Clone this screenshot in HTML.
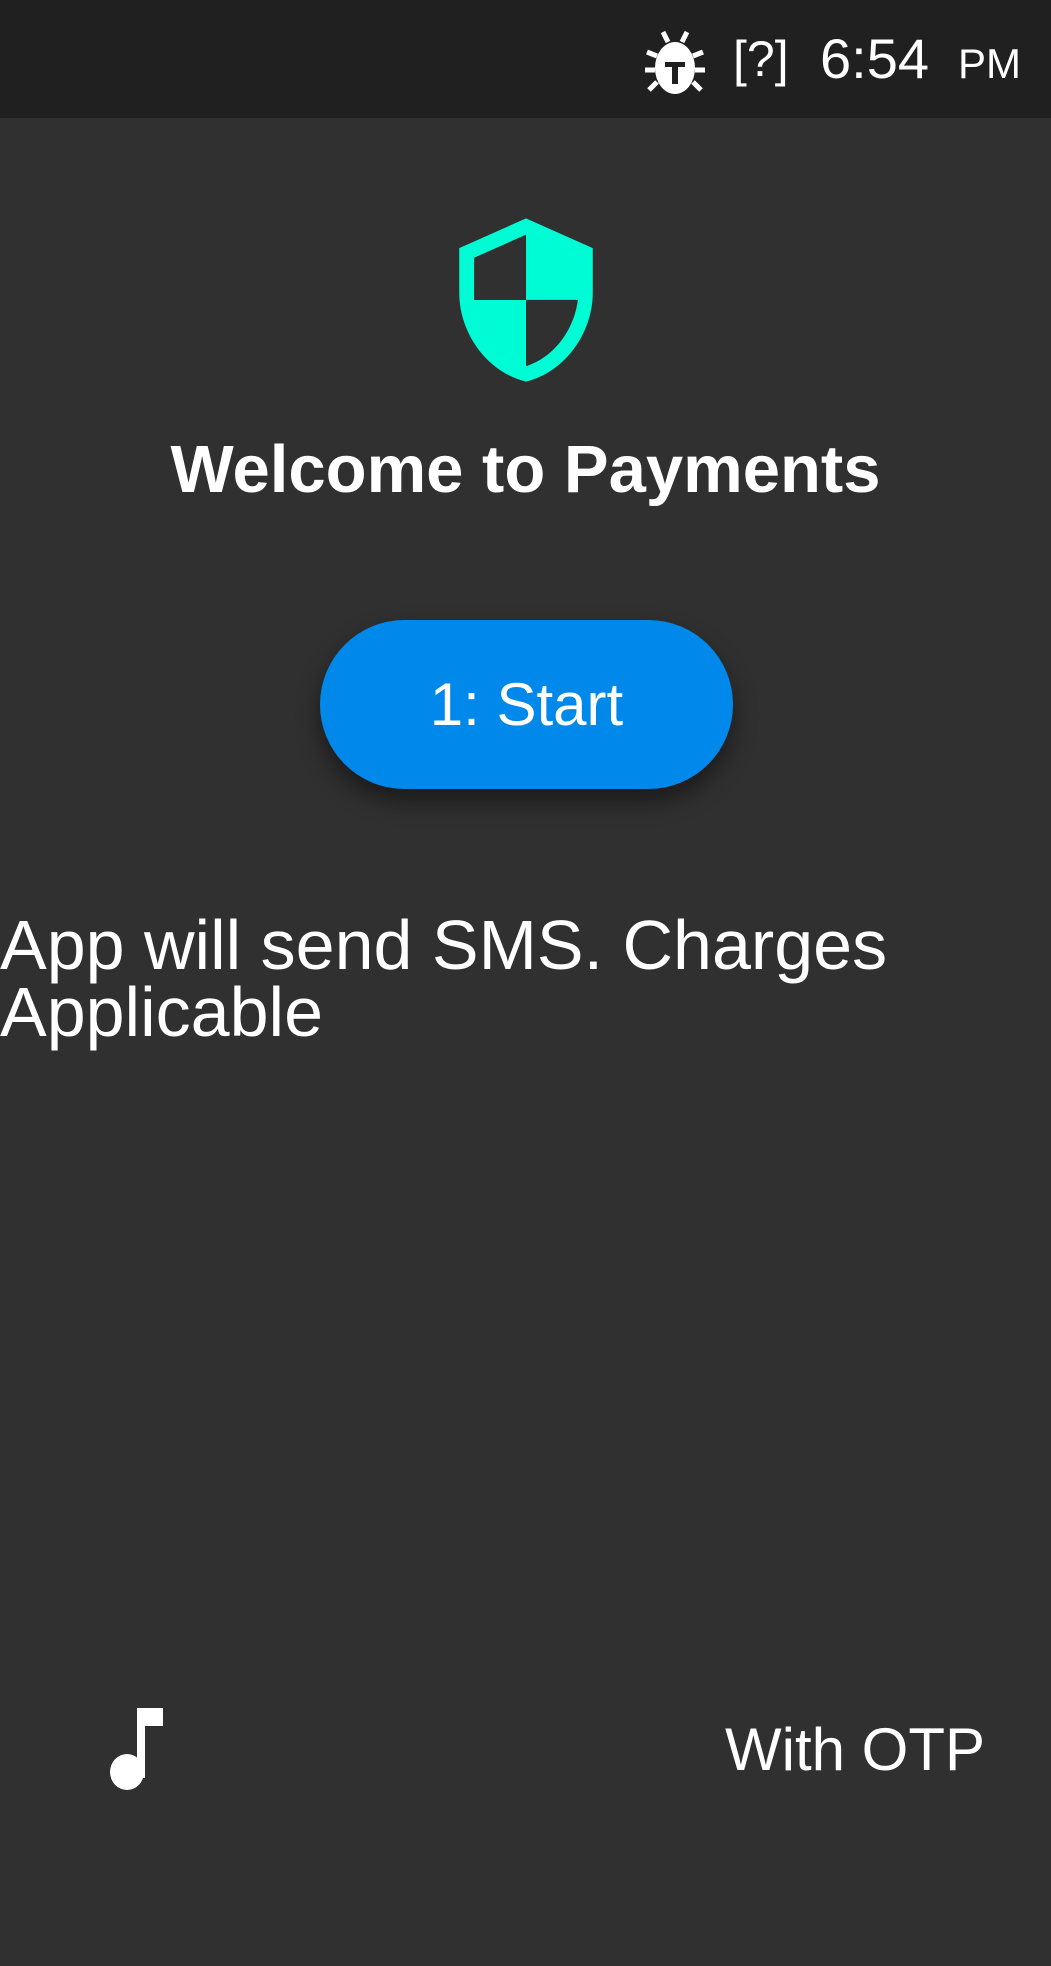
<!DOCTYPE html>
<html><head><meta charset="utf-8"><style>
html,body{margin:0;padding:0}
body{width:1051px;height:1966px;background:#303030;position:relative;overflow:hidden;font-family:"Liberation Sans",sans-serif;color:#fff}
.sb{position:absolute;left:0;top:0;width:1051px;height:118px;background:#202020}
.abs{position:absolute;white-space:nowrap}
</style></head><body>
<div class="sb">
<svg class="abs" style="left:643px;top:28px" width="64" height="68" viewBox="0 0 64 68">
<g stroke="#fff" stroke-width="5" fill="none">
<path d="M20 4 L25 14 M44 4 L39 14 M4 24 L14 28 M60 24 L50 28 M2 42 L12 42 M62 42 L52 42 M6 62 L14 54 M58 62 L50 54"/>
</g>
<ellipse cx="32" cy="40" rx="20" ry="26" fill="#fff"/>
<path d="M22 34 H42 V39 H35 V56 H29 V39 H22 Z" fill="#202020"/>
</svg>
<div class="abs" style="left:733px;top:31px;font-size:50px;line-height:56px">[?]</div>
<div class="abs" style="left:820px;top:31px;font-size:56px;line-height:56px">6:54</div>
<div class="abs" style="left:958px;top:43px;font-size:42px;line-height:42px">PM</div>
</div>

<svg class="abs" style="left:437px;top:211px" width="178" height="178" viewBox="0 0 24 24">
<path fill="#00fcd4" d="M12 1L3 5v6c0 5.55 3.84 10.74 9 12 5.16-1.26 9-6.45 9-12V5l-9-4zm0 10.99h7c-.53 4.12-3.28 7.79-7 8.94V12H5V6.3l7-3.11v8.8z"/>
</svg>

<div class="abs" style="left:0;width:1051px;text-align:center;top:436px;font-size:67px;line-height:67px;font-weight:bold">Welcome to Payments</div>

<div class="abs" style="left:320px;top:620px;width:413px;height:169px;border-radius:85px;background:#0088ea;box-shadow:0 12px 24px rgba(0,0,0,0.45);display:flex;align-items:center;justify-content:center;font-size:60px">1: Start</div>

<div class="abs" style="left:0;top:912px;font-size:70px;line-height:67px">App will send SMS. Charges<br>Applicable</div>

<svg class="abs" style="left:105px;top:1706px" width="62" height="86" viewBox="0 0 62 86">
<rect x="32" y="2" width="8" height="70" fill="#fff"/>
<rect x="32" y="2" width="26" height="18" fill="#fff"/>
<ellipse cx="22" cy="66" rx="17" ry="18" fill="#fff"/>
</svg>

<div class="abs" style="right:66px;top:1720px;font-size:60px;line-height:60px">With OTP</div>
</body></html>
